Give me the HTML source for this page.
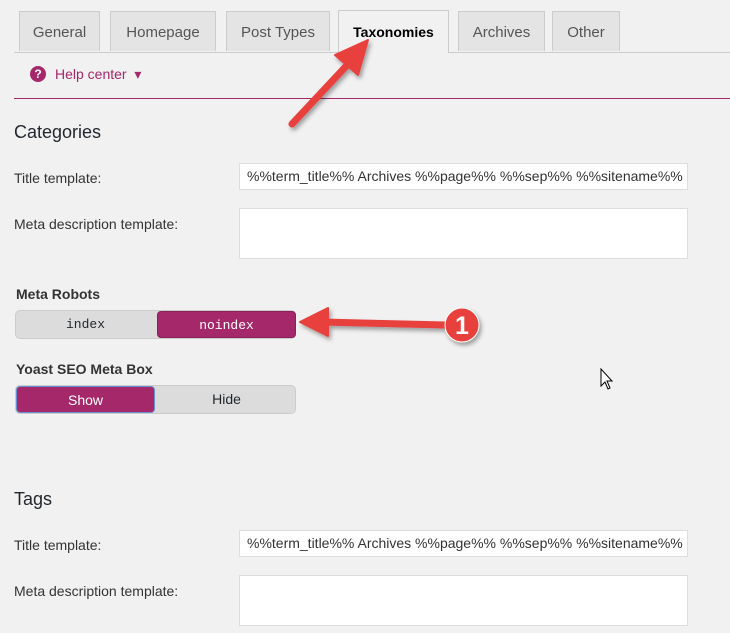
<!DOCTYPE html>
<html><head><style>
body{margin:0;width:730px;height:633px;background:#f1f1f1;font-family:"Liberation Sans",sans-serif;color:#23282d;position:relative;overflow:hidden}
.a{position:absolute}
.tab{position:absolute;top:11px;height:40px;background:#e4e4e4;border:1px solid #ccc;border-bottom:none;font-size:15px;color:#555;line-height:42px;text-align:center;box-sizing:border-box}
.tab.on{background:#f1f1f1;color:#000;top:10px;height:43px;z-index:2}
.lbl{position:absolute;left:14px;font-size:14px;color:#333}
.inp{position:absolute;left:239px;width:449px;background:#fff;border:1px solid #ddd;box-sizing:border-box;font-size:14px;color:#333;padding-left:7px;line-height:25px;white-space:nowrap;overflow:hidden}
.tg{position:absolute;left:15px;width:281px;height:29px;background:#dcdcdc;border-radius:5px;border:1px solid #ccc;box-sizing:border-box}
.tg div{position:absolute;top:0;height:27px;width:139px;line-height:27px;text-align:center;font-size:14px;border-radius:4px}
.on2{background:#a4286a;color:#fff;border:1px solid #8a2259;box-sizing:border-box}
h2{position:absolute;left:14px;margin:0;font-size:18px;font-weight:normal;color:#23282d}
.b{position:absolute;left:16px;font-size:14px;font-weight:bold;color:#333}
</style></head><body>
<div class="a" style="left:14px;top:52px;width:716px;height:1px;background:#ccc"></div>
<div class="tab" style="left:19px;width:81px">General</div>
<div class="tab" style="left:110px;width:106px">Homepage</div>
<div class="tab" style="left:226px;width:104px">Post Types</div>
<div class="tab on" style="left:338px;width:111px;font-weight:bold;font-size:14px">Taxonomies</div>
<div class="tab" style="left:458px;width:87px">Archives</div>
<div class="tab" style="left:552px;width:68px">Other</div>
<div class="a" style="left:30px;top:66px;width:16px;height:16px;border-radius:50%;background:#a4286a;color:#fff;font-size:12px;font-weight:bold;text-align:center;line-height:16px">?</div>
<div class="a" style="left:55px;top:66px;font-size:14px;color:#a4286a">Help center &nbsp;▾</div>
<div class="a" style="left:14px;top:98px;width:716px;height:1px;background:#a4286a"></div>
<h2 style="top:122px">Categories</h2>
<div class="lbl" style="top:170px">Title template:</div>
<div class="inp" style="top:163px;height:27px">%%term_title%% Archives %%page%% %%sep%% %%sitename%%</div>
<div class="lbl" style="top:216px">Meta description template:</div>
<div class="inp" style="top:208px;height:51px"></div>
<div class="b" style="top:286px">Meta Robots</div>
<div class="tg" style="top:310px"><div style="left:0;font-family:'Liberation Mono',monospace;font-size:13px">index</div><div class="on2" style="left:141px;font-family:'Liberation Mono',monospace;font-size:13px">noindex</div></div>
<div class="b" style="top:361px">Yoast SEO Meta Box</div>
<div class="tg" style="top:385px"><div class="on2" style="left:0;border-color:#6a8fd0">Show</div><div style="left:141px">Hide</div></div>
<h2 style="top:489px">Tags</h2>
<div class="lbl" style="top:537px">Title template:</div>
<div class="inp" style="top:530px;height:27px">%%term_title%% Archives %%page%% %%sep%% %%sitename%%</div>
<div class="lbl" style="top:583px">Meta description template:</div>
<div class="inp" style="top:575px;height:51px"></div>
<svg class="a" style="left:0;top:0;z-index:5" width="730" height="633">
<defs><filter id="s"><feDropShadow dx="2" dy="3" stdDeviation="2" flood-opacity="0.35"/></filter></defs>
<g filter="url(#s)" fill="#e8403c" stroke="#e8403c">
<line x1="292" y1="124" x2="350" y2="62" stroke-width="7" stroke-linecap="round"/>
<polygon points="368,40 335,55 358,75" stroke-width="2" stroke-linejoin="round"/>
<line x1="445" y1="325" x2="322" y2="322" stroke-width="7"/>
<polygon points="300,322 328,308 328,336" stroke-width="2" stroke-linejoin="round"/>
<circle cx="462" cy="325" r="17" stroke="#fff" stroke-width="1"/>
</g>
<text x="462" y="334" fill="#fff" font-size="25" font-weight="bold" font-family="Liberation Sans" text-anchor="middle">1</text>
<path d="M601 369 L601 386 L605 382 L608 389 L610 388 L607 381 L612 381 Z" fill="#fff" stroke="#000" stroke-width="1"/>
</svg>
</body></html>
